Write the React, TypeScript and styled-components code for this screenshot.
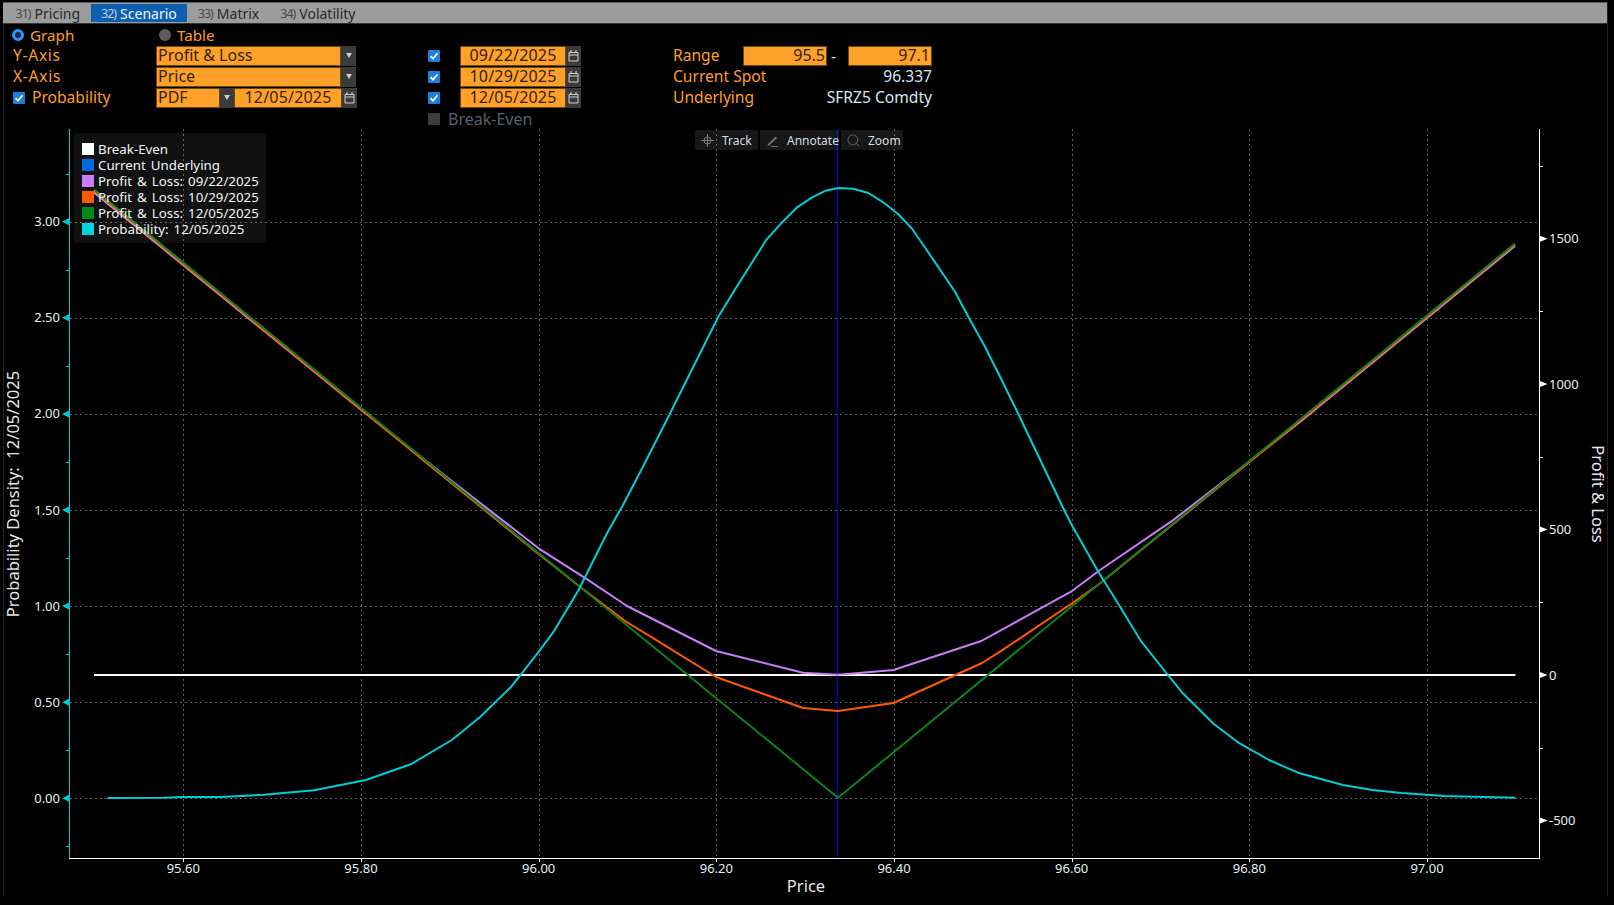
import React from "react";
import styled, { createGlobalStyle } from "styled-components";
import { Search } from "lucide-react";

const FONT = `"Noto Sans", "Open Sans", sans-serif`;
const ORANGE = "#ff9e25";

const Global = createGlobalStyle`
  html, body { margin: 0; background: #000; overflow: hidden; }
  #root { width: 1614px; height: 905px; }
  * { box-sizing: border-box; }
`;

const Page = styled.div`
  width: 1614px; height: 905px; background: #000; padding: 2px 6px 0 3px;
  font-family: ${FONT}; font-size: 15.6px; color: ${ORANGE};
`;
const Frame = styled.div`
  height: 894px; border-left: 1px solid #222; border-right: 1px solid #222;
  display: flex; flex-direction: column;
`;
const TabBar = styled.div`
  height: 22px; margin-left: -1px; padding-left: 2px; background: #9c9c9c; border-top: 1px solid #5a5a5a;
  border-bottom: 1px solid #333; display: flex; align-items: center;
`;
const Tab = styled.div<{ $active?: boolean }>`
  height: 18px; padding: 0 10.5px; display: flex; align-items: center; gap: 4px;
  background: ${(p) => (p.$active ? "#0d5fb0" : "transparent")};
  color: ${(p) => (p.$active ? "#f2f6fa" : "#2a2a2a")};
  font-size: 14px;
`;
const TabNum = styled.span<{ $active?: boolean }>`
  font-size: 12.5px; letter-spacing: -1px; color: ${(p) => (p.$active ? "#b8cde2" : "#4a4a4a")};
`;
const Form = styled.div`
  height: 101px; padding: 0 0 0 9px; display: flex; flex-shrink: 0;
`;
const Column = styled.div<{ $w: number; $gap?: number }>`
  width: ${(p) => p.$w}px; margin-right: ${(p) => p.$gap ?? 0}px; display: flex; flex-direction: column;
`;
const Row = styled.div`
  height: 21px; display: flex; align-items: center; flex-shrink: 0;
`;
const RowSpread = styled(Row)`justify-content: space-between;`;
const Label = styled.span<{ $w?: number; $track?: number }>`
  color: ${ORANGE}; line-height: 20px; white-space: nowrap; margin-top: -2px;
  letter-spacing: ${(p) => p.$track ?? 0}px;
  ${(p) => (p.$w ? `width: ${p.$w}px;` : "")}
`;
const RadioLabel = styled.span`color: ${ORANGE}; line-height: 20px; white-space: nowrap; font-size: 15.2px;`;
const Cell = styled.div<{ $w: number }>`
  width: ${(p) => p.$w}px; display: flex; align-items: center; gap: 6px;
`;
const Radio = styled.span<{ $on?: boolean }>`
  width: 12px; height: 12px; border-radius: 50%; margin-left: -1px;
  background: ${(p) => (p.$on ? "#1c2a3a" : "#5c5c5c")};
  border: ${(p) => (p.$on ? "3px solid #2f93ff" : "none")};
`;
const Field = styled.div<{ $w: number; $right?: boolean; $center?: boolean }>`
  width: ${(p) => p.$w}px; height: 20px; background: #ffa028; border: 1.5px solid #6b4613;
  color: #33240c; line-height: 17px; padding: 0 1px; white-space: nowrap; font-size: 16px;
  letter-spacing: ${(p) => (p.$center ? "0.2px" : "0")};
  text-align: ${(p) => (p.$right ? "right" : p.$center ? "center" : "left")};
`;
const SideButton = styled.div<{ $w?: number }>`
  width: ${(p) => p.$w ?? 15}px; height: 20px; background: #3b3b3b; flex-shrink: 0;
  display: flex; align-items: center; justify-content: center;
`;
const Arrow = styled.span`
  width: 0; height: 0; border-left: 3px solid transparent; border-right: 3px solid transparent;
  border-top: 5px solid #cfcfcf;
`;
const CheckBox = styled.span<{ $off?: boolean; $mr?: number }>`
  width: 12px; height: 12px; border-radius: 1px; flex-shrink: 0;
  background: ${(p) => (p.$off ? "#3d3d3d" : "#1d7fdc")};
  margin-right: ${(p) => p.$mr ?? 0}px; display: flex; align-items: center; justify-content: center;
`;
const DimLabel = styled.span`color: #56626e; line-height: 20px; font-size: 16px;`;
const Value = styled.span`color: #d6e6f4; white-space: nowrap; line-height: 20px; margin-top: -2px;`;
const Dash = styled.span`width: 21px; padding-right: 8px; text-align: center; color: #d6e6f4;`;

const ChartArea = styled.div`
  position: relative; flex: 1; min-height: 0;
`;
const ChartSvg = styled.svg`display: block; font-family: ${FONT};`;
const Dotted = styled.line`stroke: #5c5c5c; stroke-width: 1; stroke-dasharray: 2 3;`;
const Solid = styled.line<{ $c: string; $w?: number }>`
  stroke: ${(p) => p.$c}; stroke-width: ${(p) => p.$w ?? 1};
`;
const Curve = styled.polyline<{ $c: string }>`
  fill: none; stroke: ${(p) => p.$c}; stroke-width: 2; stroke-linejoin: round;
`;
const AxisText = styled.text`font-size: 13px; fill: #e4eef6;`;
const AxisTitle = styled.text`font-size: 16.5px; fill: #e6e6e6;`;

const Legend = styled.div`
  position: absolute; left: 70px; top: 8px; width: 192px; height: 110px; padding: 8px 8px;
  background: rgba(255, 255, 255, 0.065); border-radius: 3px;
  display: flex; flex-direction: column;
`;
const LegendRow = styled.div`
  height: 16px; display: flex; align-items: center; gap: 4px; color: #f0f4f8;
  font-size: 13.3px; word-spacing: 1.5px; white-space: pre; line-height: 16px;
`;
const Swatch = styled.span<{ $c: string }>`width: 12px; height: 12px; background: ${(p) => p.$c}; flex-shrink: 0;`;

const Toolbar = styled.div`
  position: absolute; left: 691px; top: 5px; height: 20px; display: flex; gap: 2px;
`;
const ToolButton = styled.div<{ $w: number }>`
  width: ${(p) => p.$w}px; height: 20px; background: rgba(255, 255, 255, 0.09); color: #d4dde6;
  font-size: 12px; display: flex; align-items: center; padding-left: 5px; gap: 7px;
  svg { color: #7c7c7c; flex-shrink: 0; }
`;

const Check = () => (
  <svg width="10" height="10" viewBox="0 0 10 10"><path d="M1.5 5.2 L4 7.8 L8.5 2.2" fill="none" stroke="#fff" strokeWidth="1.7" /></svg>
);
const Calendar = () => (
  <svg width="11" height="13" viewBox="0 0 11 13">
    <path d="M1 3.5h9v8.5H1z M1 6h9" fill="none" stroke="#d0d0d0" strokeWidth="1" />
    <path d="M3 1v2.5 M8 1v2.5" stroke="#d0d0d0" strokeWidth="1.2" />
  </svg>
);
const PencilIcon = () => (
  <svg width="15" height="15" viewBox="0 0 15 15">
    <path d="M3 11 L10.5 3.5 L12 5 L4.5 12.5 H2.5 Z" fill="#6e6e6e" />
    <path d="M6 13.5h7" stroke="#6e6e6e" strokeWidth="1" />
  </svg>
);
const CrossIcon = () => (
  <svg width="15" height="15" viewBox="0 0 15 15" fill="none" stroke="#7c7c7c" strokeWidth="1">
    <circle cx="7.5" cy="7.5" r="3.5" />
    <path d="M7.5 1v13 M1 7.5h13" />
  </svg>
);

const px = (p: number) => 183.3 + (p - 95.6) * 888.4;
const pdY = (d: number) => 798.3 - d * 192.2;
const plY = (v: number) => 675 - v * 0.2909;

const xTicks = [95.6, 95.8, 96.0, 96.2, 96.4, 96.6, 96.8, 97.0];
const pdMajor = [0, 0.5, 1, 1.5, 2, 2.5, 3];
const pdMinor = [-0.25, 0.25, 0.75, 1.25, 1.75, 2.25, 2.75, 3.25];
const plMajor = [-500, 0, 500, 1000, 1500];
const plMinor = [-250, 250, 750, 1250, 1750];

const pts = (a: number[][]) => a.map((q) => q.join(",")).join(" ");

const purple = [[94, 192.5], [360, 409], [457, 485], [538.6, 548.3], [585.7, 578.3], [627, 606], [716, 651], [803, 672.7], [838, 674.7], [893.5, 670], [982, 640.7], [1071, 591.7], [1100, 570], [1171, 521.7], [1207, 494], [1300, 422], [1515, 246]];
const orange = [[94, 191], [410.7, 450], [538, 553.5], [580, 586.7], [625, 621], [660, 642.3], [716, 677], [803, 708], [838, 711], [893.5, 703], [982, 663], [1000, 651.7], [1071, 604], [1100, 583.5], [1300, 421], [1515, 244.5]];
const green = [[94, 189.5], [838, 797.7], [1515, 243.5]];
const cyan = [[107.5, 798], [164, 797.7], [182, 797], [221, 797], [264, 794.7], [314, 790.3], [366, 780], [410.7, 764.3], [451.8, 740], [480.4, 716.7], [510.7, 687.3], [537.5, 653.3], [553.6, 631.7], [578.6, 590], [607, 533.3], [623, 505], [643.3, 466], [655, 443], [669.3, 415], [686.7, 380], [706.7, 340], [718.3, 316.7], [736.7, 286.7], [766.7, 239.3], [782.7, 221.7], [796.7, 207.7], [811.7, 197.7], [825.7, 190.7], [838.3, 188], [853.3, 188.7], [868.3, 193], [883.3, 202.3], [898.3, 214.3], [911.7, 228.3], [926.7, 250], [955, 291.7], [968.3, 316.7], [985, 346.7], [1001.7, 380], [1018.3, 414], [1035.5, 450], [1045, 470], [1063.8, 509.3], [1071.7, 525], [1098.3, 571.7], [1119, 605], [1141.4, 641.7], [1168, 675], [1182.8, 693.3], [1213.8, 724], [1238, 742.3], [1269, 760], [1298, 772.7], [1343, 785], [1372.4, 790], [1401.7, 793], [1444.8, 796], [1515.5, 797.7]];

const legendItems: [string, string][] = [
  ["#ffffff", "Break-Even"],
  ["#0069e0", "Current Underlying"],
  ["#c97dfa", "Profit & Loss: 09/22/2025"],
  ["#ff5a00", "Profit & Loss: 10/29/2025"],
  ["#00881a", "Profit & Loss: 12/05/2025"],
  ["#00d5dc", "Probability: 12/05/2025"],
];

const Chart = () => (
  <ChartSvg width="1603" height="771" viewBox="4 125 1603 771">
    {xTicks.map((t) => (
      <g key={t}>
        <Dotted x1={Math.round(px(t)) + 0.5} x2={Math.round(px(t)) + 0.5} y1={129} y2={858} />
        <Solid $c="#fff" x1={Math.round(px(t)) + 0.5} x2={Math.round(px(t)) + 0.5} y1={858} y2={862} />
        <AxisText x={px(t)} y={873} textAnchor="middle">{t.toFixed(2)}</AxisText>
      </g>
    ))}
    {pdMajor.map((d) => (
      <g key={d}>
        <Dotted x1={70} x2={1539} y1={Math.round(pdY(d)) + 0.5} y2={Math.round(pdY(d)) + 0.5} />
        <polygon points={`62,${pdY(d)} 69,${pdY(d) - 3.5} 69,${pdY(d) + 3.5}`} fill="#00c8d0" />
        <AxisText x={60} y={pdY(d) + 4.5} textAnchor="end">{d.toFixed(2)}</AxisText>
      </g>
    ))}
    {pdMinor.map((d) => (
      <Solid key={d} $c="#00c8d0" x1={66} x2={69.5} y1={Math.round(pdY(d)) + 0.5} y2={Math.round(pdY(d)) + 0.5} />
    ))}
    {plMajor.map((v) => (
      <g key={v}>
        <polygon points={`1547.5,${plY(v)} 1540,${plY(v) - 3} 1540,${plY(v) + 3}`} fill="#fff" />
        <AxisText x={1549} y={plY(v) + 4.5}>{v}</AxisText>
      </g>
    ))}
    {plMinor.map((v) => (
      <Solid key={v} $c="#fff" x1={1539} x2={1543} y1={Math.round(plY(v)) + 0.5} y2={Math.round(plY(v)) + 0.5} />
    ))}
    <Solid $c="#00c8d0" x1={69.5} x2={69.5} y1={129} y2={858} />
    <Solid $c="#fff" x1={1539.5} x2={1539.5} y1={129} y2={858} />
    <Solid $c="#fff" x1={69} x2={1540} y1={858.5} y2={858.5} />

    <Solid $c="#fff" $w={2} x1={94} x2={1515.5} y1={675} y2={675} />
    <Solid $c="#0000e0" x1={837.5} x2={837.5} y1={129} y2={858} />
    <Curve $c="#c97dfa" points={pts(purple)} />
    <Curve $c="#ff5a00" points={pts(orange)} />
    <Curve $c="#0b8418" points={pts(green)} />
    <Curve $c="#00ced6" points={pts(cyan)} />

    <AxisTitle x={806} y={892} textAnchor="middle">Price</AxisTitle>
    <AxisTitle transform="rotate(-90 19 494)" x={19} y={494} textAnchor="middle" xmlSpace="preserve">Probability Density:  12/05/2025</AxisTitle>
    <AxisTitle transform="rotate(90 1592 494)" x={1592} y={494} textAnchor="middle">Profit &amp; Loss</AxisTitle>
  </ChartSvg>
);

export default function App() {
  return (
    <Page>
      <Global />
      <Frame>
        <TabBar>
          <Tab><TabNum>31)</TabNum>Pricing</Tab>
          <Tab $active><TabNum $active>32)</TabNum>Scenario</Tab>
          <Tab><TabNum>33)</TabNum>Matrix</Tab>
          <Tab><TabNum>34)</TabNum>Volatility</Tab>
        </TabBar>
        <Form>
          <Column $w={344} $gap={71}>
            <Row>
              <Cell $w={147}><Radio $on /><RadioLabel>Graph</RadioLabel></Cell>
              <Cell $w={100}><Radio /><RadioLabel>Table</RadioLabel></Cell>
            </Row>
            <Row>
              <Label $w={143} $track={0.7}>Y-Axis</Label>
              <Field $w={185}>Profit &amp; Loss</Field>
              <SideButton><Arrow /></SideButton>
            </Row>
            <Row>
              <Label $w={143} $track={0.7}>X-Axis</Label>
              <Field $w={185}>Price</Field>
              <SideButton><Arrow /></SideButton>
            </Row>
            <Row>
              <CheckBox $mr={7}><Check /></CheckBox>
              <Label $w={124}>Probability</Label>
              <Field $w={64}>PDF</Field>
              <SideButton $w={14}><Arrow /></SideButton>
              <Field $w={108} $center>12/05/2025</Field>
              <SideButton><Calendar /></SideButton>
            </Row>
          </Column>
          <Column $w={153} $gap={92}>
            <Row />
            {["09/22/2025", "10/29/2025", "12/05/2025"].map((d) => (
              <Row key={d}>
                <CheckBox $mr={20}><Check /></CheckBox>
                <Field $w={107} $center>{d}</Field>
                <SideButton><Calendar /></SideButton>
              </Row>
            ))}
            <Row>
              <CheckBox $off $mr={8} />
              <DimLabel>Break-Even</DimLabel>
            </Row>
          </Column>
          <Column $w={259}>
            <Row />
            <Row>
              <Label $w={70}>Range</Label>
              <Field $w={84} $right>95.5</Field>
              <Dash>-</Dash>
              <Field $w={84} $right>97.1</Field>
            </Row>
            <RowSpread><Label>Current Spot</Label><Value>96.337</Value></RowSpread>
            <RowSpread><Label>Underlying</Label><Value>SFRZ5 Comdty</Value></RowSpread>
          </Column>
        </Form>
        <ChartArea>
          <Chart />
          <Legend>
            {legendItems.map(([c, t]) => (
              <LegendRow key={t}><Swatch $c={c} />{t}</LegendRow>
            ))}
          </Legend>
          <Toolbar>
            <ToolButton $w={63}><CrossIcon />Track</ToolButton>
            <ToolButton $w={79}><PencilIcon />Annotate</ToolButton>
            <ToolButton $w={62}><Search size={15} strokeWidth={1.2} />Zoom</ToolButton>
          </Toolbar>
        </ChartArea>
      </Frame>
    </Page>
  );
}
